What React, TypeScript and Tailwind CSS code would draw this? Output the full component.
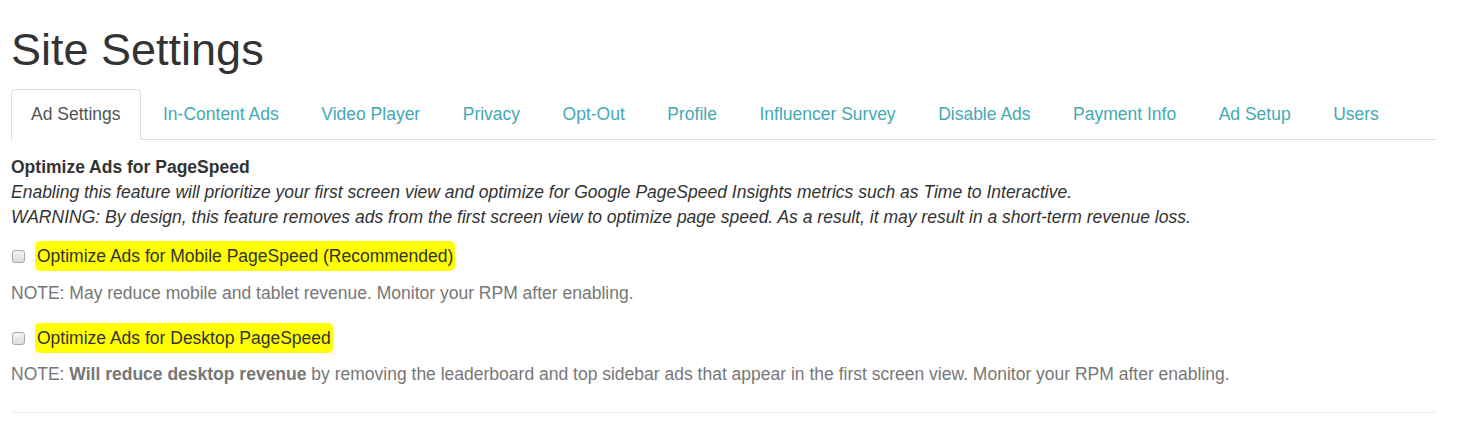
import React from 'react';

const tabs = [
  'Ad Settings',
  'In-Content Ads',
  'Video Player',
  'Privacy',
  'Opt-Out',
  'Profile',
  'Influencer Survey',
  'Disable Ads',
  'Payment Info',
  'Ad Setup',
  'Users',
];

function Checkbox() {
  return (
    <span className="inline-block w-[13px] h-[13px] rounded-[3px] border border-[#a9a9a9] bg-gradient-to-b from-[#f4f4f4] to-[#dcdcdc] shrink-0" />
  );
}

function Highlight({ children }: { children: React.ReactNode }) {
  return (
    <span className="bg-[#ffff00] rounded-[5px] px-[2px] py-[5px] -mx-[2px]">{children}</span>
  );
}

export default function App() {
  return (
    <div
      className="bg-white min-h-[431px] text-[#333333]"
      style={{ fontFamily: '"Liberation Sans", Arial, sans-serif' }}
    >
      <div className="mx-[11px] w-[1425px] pt-[25px]">
        <h1 className="text-[45px] leading-[49.5px] font-normal">Site Settings</h1>

        <ul className="flex mt-[14.5px] border-b border-[#dddddd]">
          {tabs.map((t, i) => (
            <li key={t} className="mr-[2.5px] -mb-px">
              <a
                href="#"
                className={
                  i === 0
                    ? 'block px-[19px] py-3 text-[17.5px] leading-[25px] text-[#555555] bg-white border border-[#dddddd] border-b-transparent rounded-t-[4px]'
                    : 'block px-[19px] py-3 text-[17.5px] leading-[25px] text-[#45a9b3] border border-transparent'
                }
              >
                {t}
              </a>
            </li>
          ))}
        </ul>

        <div className="text-[17.5px] leading-[25px] mt-[14.5px]">
          <div className="font-bold">Optimize Ads for PageSpeed</div>
          <div className="italic">
            Enabling this feature will prioritize your first screen view and optimize for Google PageSpeed Insights metrics such as Time to Interactive.
          </div>
          <div className="italic">
            WARNING: By design, this feature removes ads from the first screen view to optimize page speed. As a result, it may result in a short-term revenue loss.
          </div>

          <label className="flex items-center gap-[12px] mt-[14.7px] pl-[1px]">
            <Checkbox />
            <span>
              <Highlight>Optimize Ads for Mobile PageSpeed (Recommended)</Highlight>
            </span>
          </label>
          <p className="text-[#777777] mt-[12.3px]">
            NOTE: May reduce mobile and tablet revenue. Monitor your RPM after enabling.
          </p>

          <label className="flex items-center gap-[12px] mt-[19.7px] pl-[1px]">
            <Checkbox />
            <span>
              <Highlight>Optimize Ads for Desktop PageSpeed</Highlight>
            </span>
          </label>
          <p className="text-[#777777] mt-[11px]">
            NOTE: <b className="font-bold">Will reduce desktop revenue</b> by removing the leaderboard and top sidebar ads that appear in the first screen view. Monitor your RPM after enabling.
          </p>
        </div>

        <hr className="mt-[24.5px] border-0 border-t border-[#eeeeee]" />
      </div>
    </div>
  );
}
